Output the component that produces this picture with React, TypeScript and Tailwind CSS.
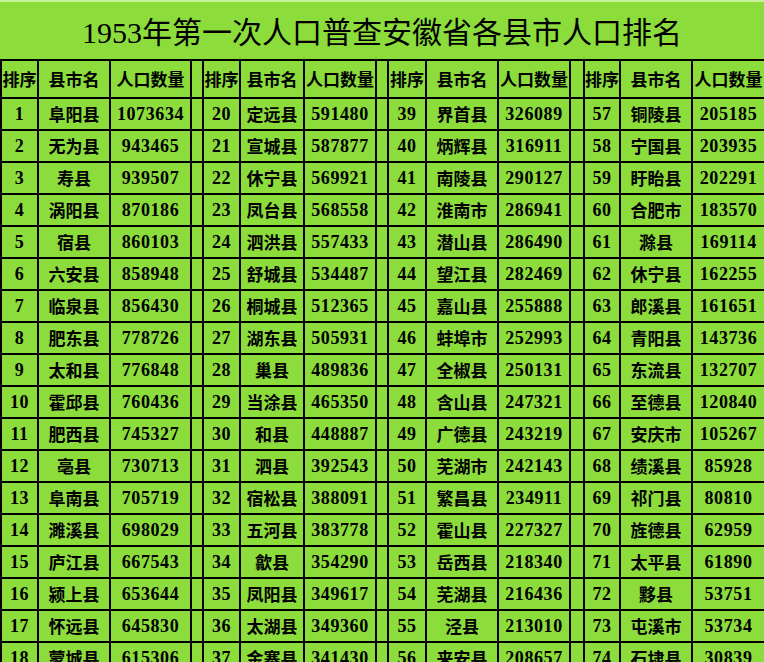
import React from 'react';

type Entry = [number, string, string];

const cols: Entry[][] = [
  [
    [1, '阜阳县', '1073634'], [2, '无为县', '943465'], [3, '寿县', '939507'], [4, '涡阳县', '870186'],
    [5, '宿县', '860103'], [6, '六安县', '858948'], [7, '临泉县', '856430'], [8, '肥东县', '778726'],
    [9, '太和县', '776848'], [10, '霍邱县', '760436'], [11, '肥西县', '745327'], [12, '亳县', '730713'],
    [13, '阜南县', '705719'], [14, '濉溪县', '698029'], [15, '庐江县', '667543'], [16, '颍上县', '653644'],
    [17, '怀远县', '645830'], [18, '蒙城县', '615306'],
  ],
  [
    [20, '定远县', '591480'], [21, '宣城县', '587877'], [22, '休宁县', '569921'], [23, '凤台县', '568558'],
    [24, '泗洪县', '557433'], [25, '舒城县', '534487'], [26, '桐城县', '512365'], [27, '湖东县', '505931'],
    [28, '巢县', '489836'], [29, '当涂县', '465350'], [30, '和县', '448887'], [31, '泗县', '392543'],
    [32, '宿松县', '388091'], [33, '五河县', '383778'], [34, '歙县', '354290'], [35, '凤阳县', '349617'],
    [36, '太湖县', '349360'], [37, '金寨县', '341430'],
  ],
  [
    [39, '界首县', '326089'], [40, '炳辉县', '316911'], [41, '南陵县', '290127'], [42, '淮南市', '286941'],
    [43, '潜山县', '286490'], [44, '望江县', '282469'], [45, '嘉山县', '255888'], [46, '蚌埠市', '252993'],
    [47, '全椒县', '250131'], [48, '含山县', '247321'], [49, '广德县', '243219'], [50, '芜湖市', '242143'],
    [51, '繁昌县', '234911'], [52, '霍山县', '227327'], [53, '岳西县', '218340'], [54, '芜湖县', '216436'],
    [55, '泾县', '213010'], [56, '来安县', '208657'],
  ],
  [
    [57, '铜陵县', '205185'], [58, '宁国县', '203935'], [59, '盱眙县', '202291'], [60, '合肥市', '183570'],
    [61, '滁县', '169114'], [62, '休宁县', '162255'], [63, '郎溪县', '161651'], [64, '青阳县', '143736'],
    [65, '东流县', '132707'], [66, '至德县', '120840'], [67, '安庆市', '105267'], [68, '绩溪县', '85928'],
    [69, '祁门县', '80810'], [70, '旌德县', '62959'], [71, '太平县', '61890'], [72, '黟县', '53751'],
    [73, '屯溪市', '53734'], [74, '石埭县', '30839'],
  ],
];

const widths = [37, 72, 81, 12, 37, 64, 72, 12, 38, 72, 72, 14, 36, 72, 73];

const cell = 'border-2 border-black p-0 text-center whitespace-nowrap overflow-hidden';
const num = "font-['Liberation_Serif',serif] text-[18px] font-bold tracking-[0.6px]";
const cjk = "font-['Noto_Sans_CJK_SC',sans-serif] text-[17px] font-bold";

export default function App() {
  return (
    <div className="w-[764px] h-[662px] overflow-hidden bg-[#8cdc3c] text-black">
      {/* Title */}
      <div className="h-[59px] border-t-2 border-[#c6f29c] flex items-center justify-center pt-1">
        <h1 className="text-[30px] font-normal leading-none font-['Liberation_Serif','Noto_Sans_CJK_SC',serif]">
          1953年第一次人口普查安徽省各县市人口排名
        </h1>
      </div>

      {/* Table */}
      <table className="w-[764px] table-fixed border-collapse">
        <colgroup>
          {widths.map((w, i) => (
            <col key={i} style={{ width: w }} />
          ))}
        </colgroup>
        <thead>
          <tr className="h-[38px]">
            {cols.map((_, g) => (
              <React.Fragment key={g}>
                <th className={`${cell} ${cjk}`}>排序</th>
                <th className={`${cell} ${cjk}`}>县市名</th>
                <th className={`${cell} ${cjk}`}>人口数量</th>
                {g < 3 && <th className={cell} />}
              </React.Fragment>
            ))}
          </tr>
        </thead>
        <tbody>
          {cols[0].map((_, r) => (
            <tr key={r} className="h-[32px]">
              {cols.map((col, g) => (
                <React.Fragment key={g}>
                  <td className={`${cell} ${num}`}>{col[r][0]}</td>
                  <td className={`${cell} ${cjk}`}>{col[r][1]}</td>
                  <td className={`${cell} ${num}`}>{col[r][2]}</td>
                  {g < 3 && <td className={cell} />}
                </React.Fragment>
              ))}
            </tr>
          ))}
        </tbody>
      </table>
    </div>
  );
}
